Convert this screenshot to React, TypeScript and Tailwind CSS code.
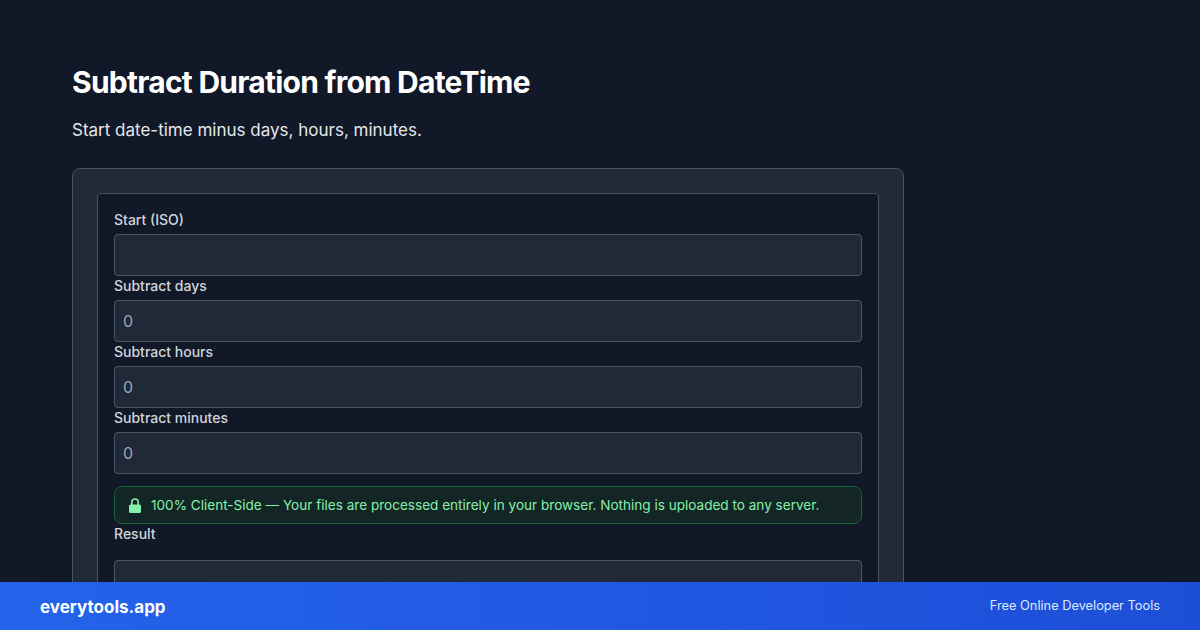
const fields = ['Subtract days', 'Subtract hours', 'Subtract minutes'];

const LockIcon = () => (
  <svg className="w-3 h-[15px] shrink-0" viewBox="0 0 12 15" fill="none">
    <rect x="0" y="6.5" width="12" height="8.5" rx="1.5" fill="currentColor" />
    <path d="M2.8 7V4.2a3.2 3.2 0 016.4 0V7" stroke="currentColor" strokeWidth="1.6" />
  </svg>
);

const App = () => {
  return (
    <div className="relative w-[1200px] h-[630px] overflow-hidden bg-[#111827] font-['Inter',sans-serif]">
      <div className="w-[832px] ml-[72px] pt-[64px]">
        <h1 className="text-3xl leading-9 font-bold tracking-tight text-white">Subtract Duration from DateTime</h1>
        <p className="mt-4 mb-6 text-[17px] leading-7 text-[#e5e7eb]">Start date-time minus days, hours, minutes.</p>

        {/* Outer card */}
        <div className="bg-[#1f2937] border border-[#4b5563] rounded-lg p-6">
          <div className="bg-[#111827] border border-[#4b5563] rounded p-4">
            <label className="block text-sm font-medium text-[#d1d5db] mb-1">Start (ISO)</label>
            <input className="block w-full h-[42px] bg-[#1f2937] border border-[#4b5563] rounded px-2 text-[#9ca3af]" />

            {fields.map((name) => (
              <div key={name}>
                <label className="block text-sm font-medium text-[#d1d5db] mb-1">{name}</label>
                <input
                  readOnly
                  value="0"
                  className="block w-full h-[42px] bg-[#1f2937] border border-[#4b5563] rounded px-2 text-[#9ca3af]"
                />
              </div>
            ))}

            <div className="flex items-center gap-2.5 h-[38px] mt-3 px-3.5 rounded-lg border border-[#166534] bg-[#132625] text-[13.57px] text-[#86efac]">
              <LockIcon />
              <span>100% Client-Side — Your files are processed entirely in your browser. Nothing is uploaded to any server.</span>
            </div>

            <label className="block text-sm font-medium text-[#d1d5db] mb-4">Result</label>
            <div className="h-[42px] bg-[#1f2937] border border-[#4b5563] rounded" />
          </div>
        </div>
      </div>

      {/* Bottom brand bar */}
      <div className="absolute left-0 right-0 bottom-0 h-12 px-10 flex items-center justify-between bg-gradient-to-r from-[#2563eb] to-[#1d4ed8]">
        <span className="mt-1 text-[17px] font-bold text-white">everytools.app</span>
        <span className="text-[12.8px] text-[#dbeafe]">Free Online Developer Tools</span>
      </div>
    </div>
  );
};

export default App;
